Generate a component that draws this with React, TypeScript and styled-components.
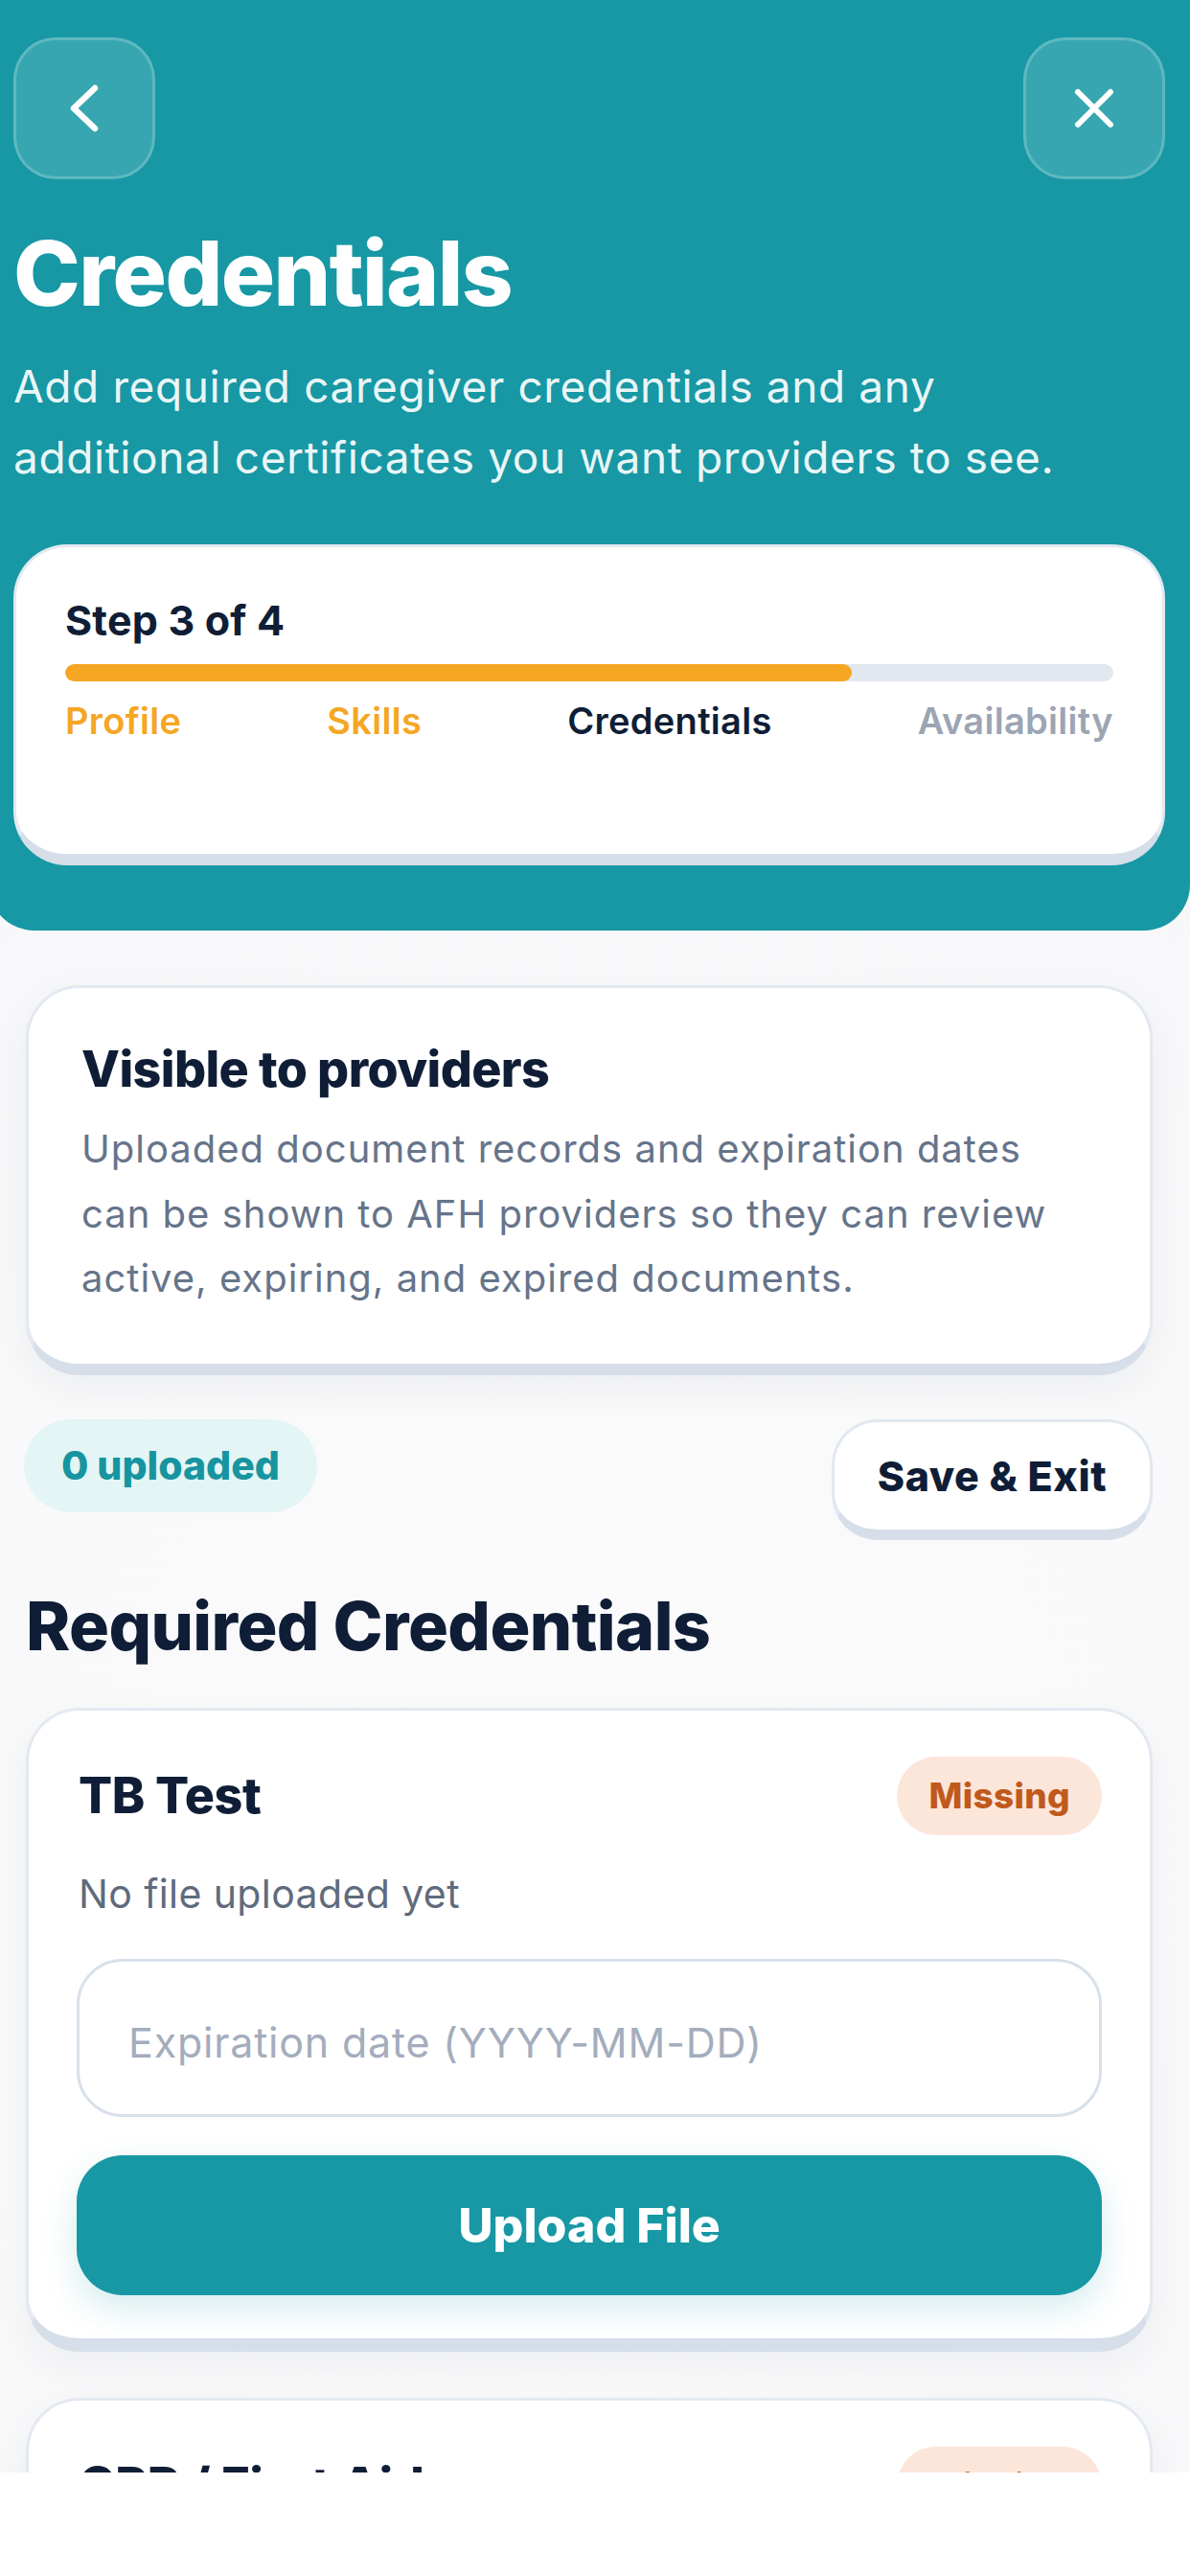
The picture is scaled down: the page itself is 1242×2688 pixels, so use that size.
import React from 'react'
import styled, { createGlobalStyle } from 'styled-components'

const teal = '#1798A4'
const navy = '#0F1E36'

const GlobalStyle = createGlobalStyle`
    html, body {
        margin: 0;
        padding: 0;
        background: #F6F7F9;
        overflow: hidden;
    }
    body {
        font-family: Inter, 'Noto Sans', 'Liberation Sans', sans-serif;
        color: ${navy};
    }
    * {
        box-sizing: border-box;
    }
`

const Screen = styled.div`
    width: 1254px;
    margin-left: -12px;
    min-height: 2688px;
    background: radial-gradient(circle at 50% 60%, #FBFBFC 0%, #F4F5F7 100%);
`

const Header = styled.header`
    background: ${teal};
    padding: 39px 26px 68px;
    border-radius: 0 0 48px 48px;
`

const TopBar = styled.div`
    display: flex;
    justify-content: space-between;
`

const IconButton = styled.button`
    width: 148px;
    height: 148px;
    border-radius: 44px;
    background: rgba(255, 255, 255, 0.14);
    border: 3px solid rgba(255, 255, 255, 0.2);
    display: flex;
    align-items: center;
    justify-content: center;
    padding: 0;
`

const Title = styled.h1`
    margin: 48px 0 0;
    font-size: 94px;
    line-height: 100px;
    font-weight: 800;
    letter-spacing: -1.6px;
    color: #fff;
`

const Subtitle = styled.p`
    max-width: 1120px;
    margin: 31px 0 0;
    font-size: 46px;
    line-height: 74px;
    font-weight: 400;
    letter-spacing: 0.6px;
    color: rgba(255, 255, 255, 0.93);
`

const Card = styled.div`
    background: #fff;
    border: 3px solid #E3E9F1;
    border-bottom: 12px solid #D6DEE9;
    border-radius: 56px;
    box-shadow: 0 14px 40px rgba(15, 30, 54, 0.05);
`

const ProgressCard = styled(Card)`
    margin-top: 54px;
    padding: 51px 51px 117px;
    box-shadow: none;
`

const StepLabel = styled.div`
    font-size: 43px;
    line-height: 50px;
    font-weight: 700;
    letter-spacing: 0.2px;
    color: ${navy};
`

const Track = styled.div`
    margin-top: 21px;
    height: 18px;
    border-radius: 9px;
    background: #E2E8F0;
    overflow: hidden;
`

const Fill = styled.div<{ $pct: number }>`
    width: ${(p) => p.$pct}%;
    height: 100%;
    border-radius: 9px;
    background: #F5A623;
`

const Steps = styled.div`
    margin-top: 19px;
    display: flex;
    justify-content: space-between;
`

const stepColors = {
    done: '#F5A623',
    current: navy,
    todo: '#9CA5B4',
}

const StepName = styled.span<{ $state: keyof typeof stepColors }>`
    font-size: 38px;
    line-height: 44px;
    font-weight: 600;
    letter-spacing: 0.3px;
    color: ${(p) => stepColors[p.$state]};
`

const Body = styled.main`
    padding: 57px 39px 0;
`

const InfoCard = styled(Card)`
    padding: 55px 55px 55px;
`

const InfoTitle = styled.h2`
    margin: 0;
    font-size: 52px;
    line-height: 60px;
    font-weight: 800;
    letter-spacing: -0.6px;
    color: ${navy};
`

const InfoText = styled.p`
    margin: 19px 0 0;
    font-size: 40px;
    line-height: 67.5px;
    letter-spacing: 1px;
    color: #66748A;
`

const ActionRow = styled.div`
    margin-top: 46px;
    display: flex;
    justify-content: space-between;
    align-items: flex-start;
`

const CountPill = styled.div`
    height: 97px;
    margin-left: -2px;
    padding: 0 39px;
    border-radius: 49px;
    background: #E4F5F5;
    color: #1794A0;
    font-size: 41px;
    font-weight: 800;
    display: flex;
    align-items: center;
`

const SaveButton = styled.button`
    width: 335px;
    height: 126px;
    background: #fff;
    border: 3px solid #E1E8F0;
    border-bottom: 11px solid #D6DEE9;
    border-radius: 48px;
    font-family: inherit;
    font-size: 43px;
    font-weight: 800;
    letter-spacing: 0.6px;
    color: ${navy};
    padding: 0;
`

const SectionTitle = styled.h2`
    margin: 48px 0 0;
    font-size: 70px;
    line-height: 83px;
    font-weight: 800;
    letter-spacing: -0.6px;
    color: ${navy};
`

const CredCard = styled(Card)`
    margin-top: 44px;
    padding: 48px 50px 45px;
    border-bottom-width: 14px;
    & + & {
        margin-top: 48px;
    }
`

const CardHead = styled.div`
    display: flex;
    justify-content: space-between;
    align-items: center;
`

const CredName = styled.h3`
    margin: 0 0 0 2px;
    font-size: 52px;
    font-weight: 800;
    letter-spacing: -0.4px;
    color: ${navy};
`

const StatusBadge = styled.span`
    height: 82px;
    padding: 0 33px;
    border-radius: 41px;
    background: #FCE6DA;
    color: #C05A1C;
    font-size: 37px;
    font-weight: 800;
    letter-spacing: 0.3px;
    display: flex;
    align-items: center;
`

const Hint = styled.p`
    margin: 35px 0 0 2px;
    font-size: 41px;
    line-height: 53px;
    letter-spacing: 0.4px;
    color: #5F6B7D;
`

const DateInput = styled.input`
    display: block;
    width: 100%;
    height: 165px;
    margin-top: 41px;
    padding: 10px 51px 0;
    border: 3px solid #D8E0EA;
    border-radius: 48px;
    background: #fff;
    font-family: inherit;
    font-size: 43px;
    letter-spacing: 0.8px;
    color: ${navy};
    outline: none;
    &::placeholder {
        color: #A3ADBD;
    }
`

const UploadButton = styled.button`
    display: block;
    width: 100%;
    height: 146px;
    margin-top: 40px;
    border: none;
    border-radius: 48px;
    background: ${teal};
    color: #fff;
    font-family: inherit;
    font-size: 50px;
    font-weight: 800;
    box-shadow: 0 14px 34px rgba(23, 152, 164, 0.18);
`

const BottomBar = styled.div`
    position: fixed;
    left: 0;
    right: 0;
    bottom: 0;
    height: 108px;
    background: #fff;
`

const BackIcon = () => (
    <svg width='40' height='60' viewBox='0 0 40 60'>
        <path d='M31 9 L9 30 L31 51' fill='none' stroke='#fff' strokeWidth='6.5' strokeLinecap='round' strokeLinejoin='round' />
    </svg>
)

const CloseIcon = () => (
    <svg width='48' height='48' viewBox='0 0 48 48'>
        <path d='M7 7 L41 41 M41 7 L7 41' fill='none' stroke='#fff' strokeWidth='6' strokeLinecap='round' />
    </svg>
)

const steps: { name: string; state: keyof typeof stepColors }[] = [
    { name: 'Profile', state: 'done' },
    { name: 'Skills', state: 'done' },
    { name: 'Credentials', state: 'current' },
    { name: 'Availability', state: 'todo' },
]

const credentials = ['TB Test', 'CPR / First Aid']

const App = () => {
    return (
        <Screen>
            <GlobalStyle />
            <Header>
                <TopBar>
                    <IconButton aria-label='Back'>
                        <BackIcon />
                    </IconButton>
                    <IconButton aria-label='Close'>
                        <CloseIcon />
                    </IconButton>
                </TopBar>
                <Title>Credentials</Title>
                <Subtitle>
                    Add required caregiver credentials and any additional certificates you want providers to see.
                </Subtitle>
                <ProgressCard>
                    <StepLabel>Step 3 of 4</StepLabel>
                    <Track>
                        <Fill $pct={75} />
                    </Track>
                    <Steps>
                        {steps.map((s) => (
                            <StepName key={s.name} $state={s.state}>
                                {s.name}
                            </StepName>
                        ))}
                    </Steps>
                </ProgressCard>
            </Header>
            <Body>
                <InfoCard>
                    <InfoTitle>Visible to providers</InfoTitle>
                    <InfoText>
                        Uploaded document records and expiration dates can be shown to AFH providers so they can review
                        active, expiring, and expired documents.
                    </InfoText>
                </InfoCard>
                <ActionRow>
                    <CountPill>0 uploaded</CountPill>
                    <SaveButton>Save &amp; Exit</SaveButton>
                </ActionRow>
                <SectionTitle>Required Credentials</SectionTitle>
                {credentials.map((c) => (
                    <CredCard key={c}>
                        <CardHead>
                            <CredName>{c}</CredName>
                            <StatusBadge>Missing</StatusBadge>
                        </CardHead>
                        <Hint>No file uploaded yet</Hint>
                        <DateInput placeholder='Expiration date (YYYY-MM-DD)' />
                        <UploadButton>Upload File</UploadButton>
                    </CredCard>
                ))}
            </Body>
            <BottomBar />
        </Screen>
    )
}

export default App
